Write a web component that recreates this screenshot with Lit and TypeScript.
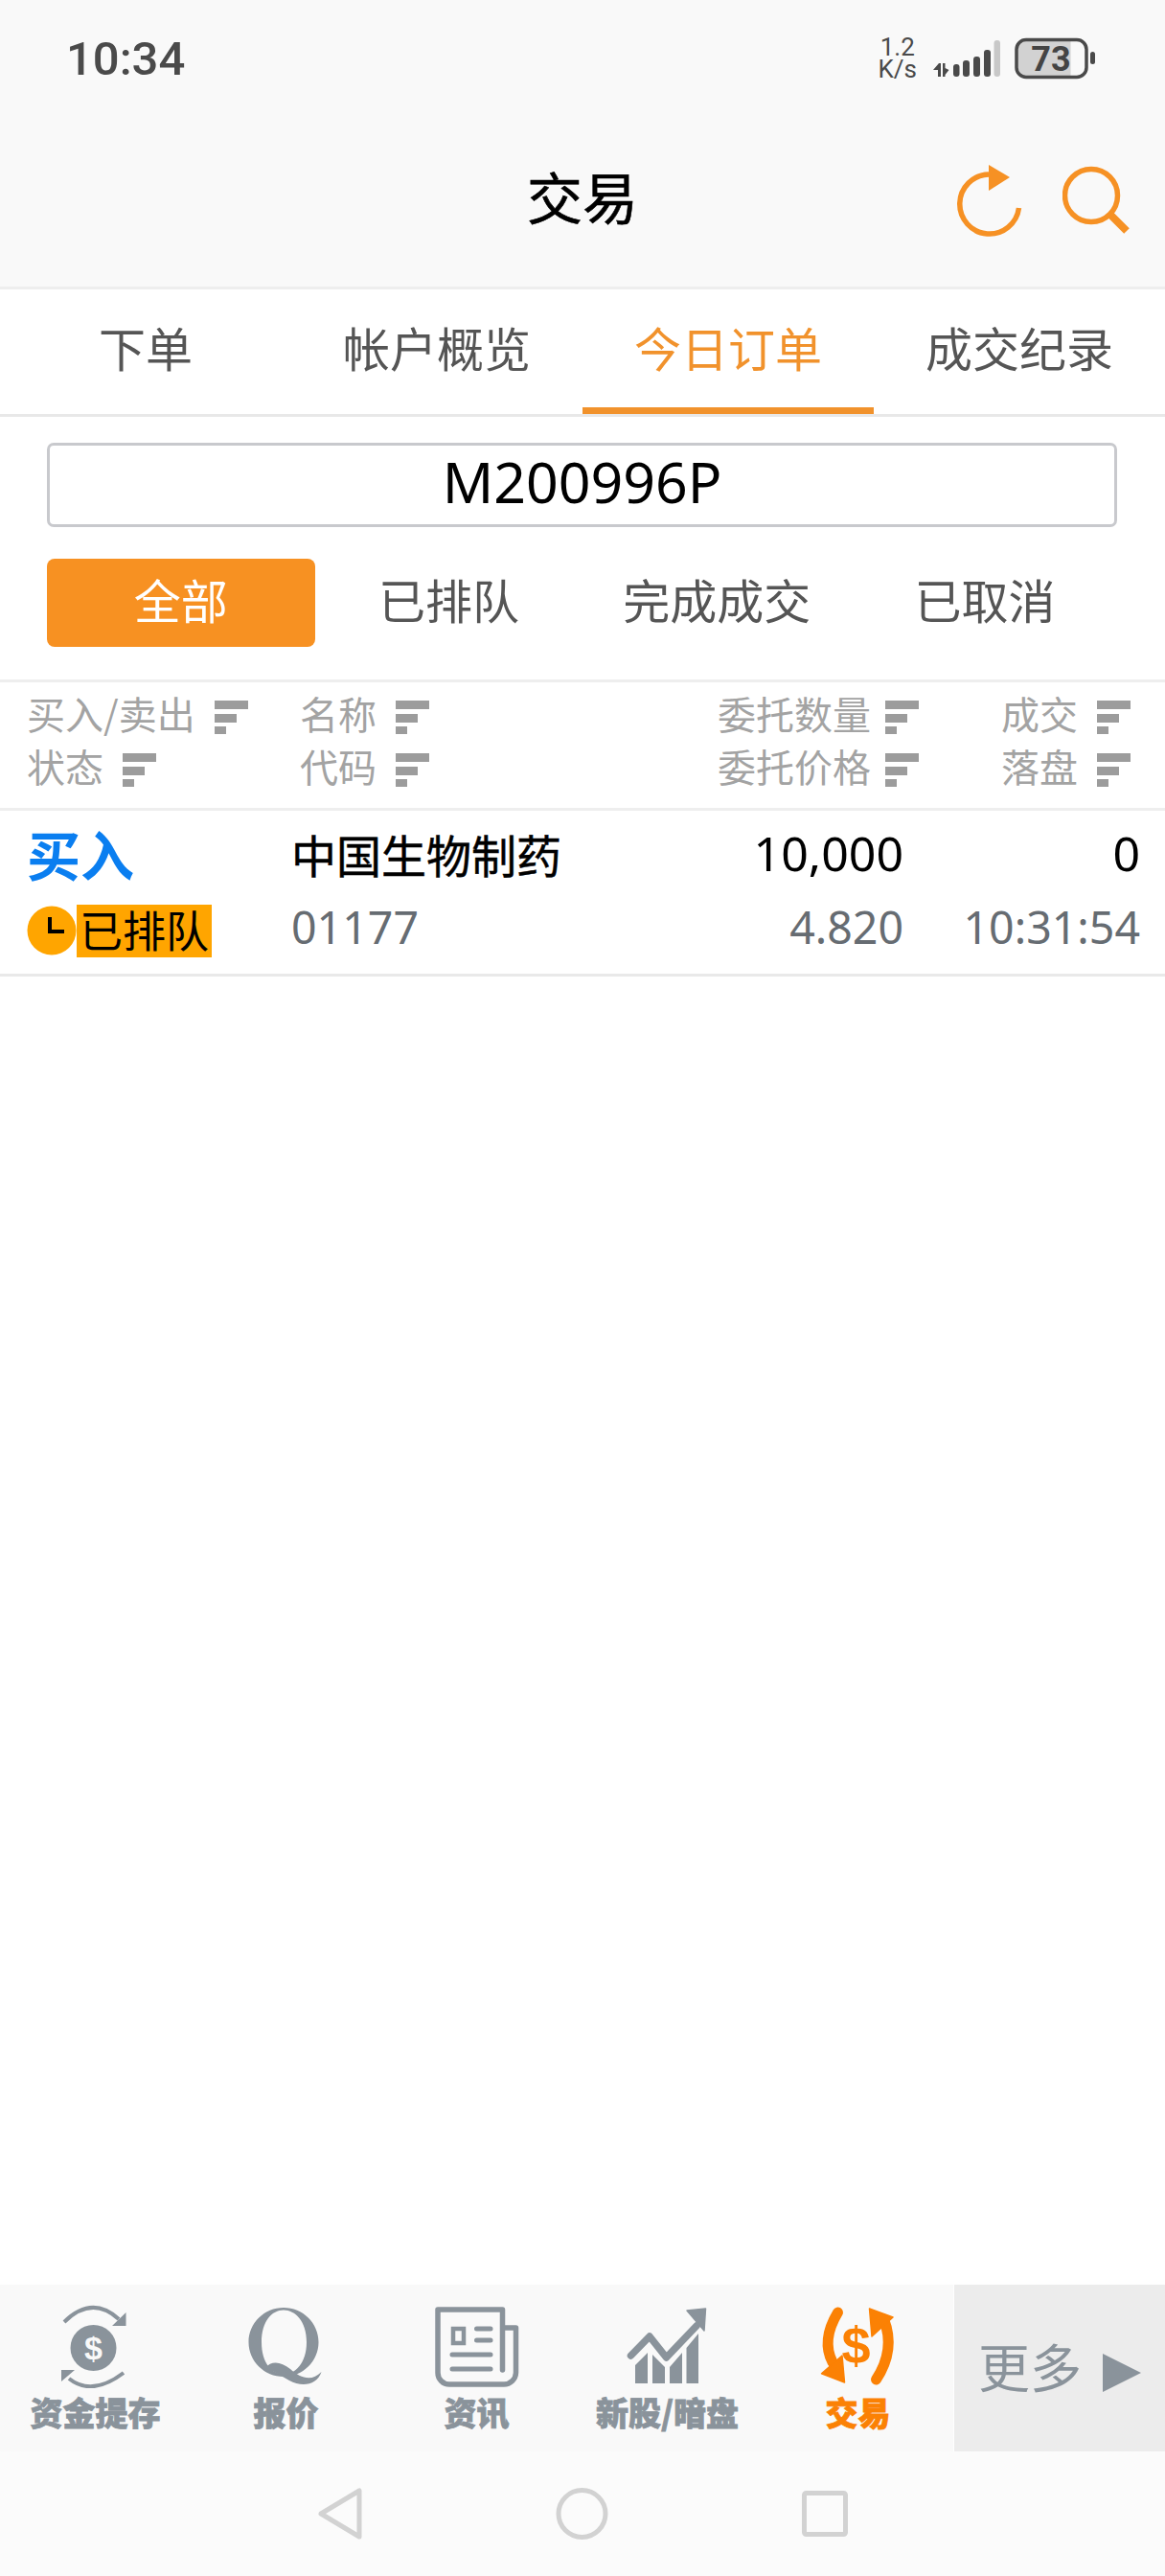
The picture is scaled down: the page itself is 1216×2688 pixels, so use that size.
import { LitElement, html, css, svg } from 'lit'
import { customElement } from 'lit/decorators.js'

const sortIcon = html`<svg class="sort" viewBox="0 0 35 35" width="35" height="35">
  <path d="M0 0h35v9H0zM0 14h23v9H0zM0 27h12v8H0z" fill="#9c9c9c" />
</svg>`

const grey = '#8a939b'
const hot = '#fb8104'

const navItems = [
  { label: '资金提存', icon: svg`
    <circle cx="47.5" cy="46" r="24" fill="${grey}"/>
    <path d="M17 19Q46 -9.5 74 16M79 72Q46 97 22 78" fill="none" stroke="${grey}" stroke-width="4"/>
    <path d="M81.5 9v14H67zM14 81V69h14z" fill="${grey}"/>
    <text x="47.5" y="58" text-anchor="middle" font-size="34" font-weight="700" fill="#f9f9f9" font-family="Liberation Sans">$</text>` },
  { label: '报价', icon: svg`
    <path fill-rule="evenodd" fill="${grey}" d="M47 4C67 4 83.5 20 83.5 40S67 76 47 76 10.5 60 10.5 40 27 4 47 4zM47 6.5C35 6.5 24 18 24 40S35 73.5 47 73.5 71 62 71 40 59 6.5 47 6.5z"/>
    <path fill="${grey}" d="M28 67C34 59 44 60 54 68 64 77 76 82 86.5 71 82 85 66 87 53 80 44 75 36 70 28 67z"/>` },
  { label: '资讯', icon: svg`
    <path d="M76.5 69V6H9V72A12 12 0 0 0 21 84H78A12.5 12.5 0 0 0 90.5 72V25H78" fill="none" stroke="${grey}" stroke-width="5.5" stroke-linejoin="round" stroke-linecap="round"/>
    <rect x="25" y="26" width="11" height="15" fill="none" stroke="${grey}" stroke-width="4.5"/>
    <path d="M49.5 26H64M49.5 38H64M24 53H64M24 68H64" stroke="${grey}" stroke-width="5" stroke-linecap="round"/>` },
  { label: '新股/暗盘', icon: svg`
    <path d="M11.5 54 31 34 48.5 56 80 23" fill="none" stroke="${grey}" stroke-width="7.5" stroke-linecap="round" stroke-linejoin="round"/>
    <path d="M70 7 89.5 5 88 28z" fill="${grey}" stroke="${grey}" stroke-width="1.5" stroke-linejoin="round"/>
    <path d="M16 83V64L29 51V83zM34 83V53L47 66V83zM52 83V66L65 51V83zM69.5 83V46L82 31V83z" fill="${grey}"/>` },
  { label: '交易', active: true, icon: svg`
    <path d="M28.5 9Q11 38 23 61" fill="none" stroke="${hot}" stroke-width="11" stroke-linecap="round"/>
    <path d="M11.5 72.7 33 54 35.5 82z" fill="${hot}" stroke="${hot}" stroke-width="1.5" stroke-linejoin="round"/>
    <path d="M76.5 16Q89 48 68.5 79" fill="none" stroke="${hot}" stroke-width="11" stroke-linecap="round"/>
    <path d="M61.5 5 86 14 64 34z" fill="${hot}" stroke="${hot}" stroke-width="1.5" stroke-linejoin="round"/>
    <text x="47.5" y="62" text-anchor="middle" font-size="54" font-weight="700" fill="${hot}" font-family="Liberation Sans">$</text>` },
]

@customElement('app-root')
export class AppRoot extends LitElement {
  static styles = css`
    :host {
      display: flex;
      flex-direction: column;
      width: 1216px;
      height: 2688px;
      background: #fff;
      font-family: "Noto Sans CJK SC", "Noto Sans", sans-serif;
      color: #000;
      overflow: hidden;
    }

    .top {
      height: 302px;
      box-sizing: border-box;
      background: #f9f9f9;
      border-bottom: 3px solid #eee;
      display: flex;
      flex-direction: column;
      flex: none;
    }

    .status {
      height: 128px;
      display: flex;
      align-items: center;
      padding: 0 73px 6px 69px;
      box-sizing: border-box;
      flex: none;
    }
    .clock {
      font-family: Roboto, sans-serif;
      font-size: 49px;
      font-weight: 500;
      color: #4a4a4a;
      flex: 1;
    }
    .speed {
      font-family: Roboto, sans-serif;
      font-size: 26px;
      line-height: 23px;
      color: #4a4a4a;
      text-align: center;
      margin-right: 17px;
    }
    .signal { margin-right: 15px; display: block; }
    .battery { display: block; }

    .title-bar {
      flex: 1;
      display: flex;
      align-items: center;
      justify-content: center;
      position: relative;
      padding-bottom: 19px;
    }
    .title {
      font-size: 58px;
      line-height: 1;
      -webkit-text-stroke: 0.6px #000;
    }
    .actions {
      position: absolute;
      left: 999px;
      top: 44px;
      display: flex;
      gap: 40px;
    }

    .tabs {
      display: grid;
      grid-template-columns: repeat(4, 1fr);
      height: 133px;
      box-sizing: border-box;
      border-bottom: 3px solid #e8e8e8;
      flex: none;
    }
    .tab {
      display: flex;
      align-items: center;
      justify-content: center;
      font-size: 49px;
      color: #555;
      box-sizing: border-box;
      padding-bottom: 4px;
      border-bottom: 7px solid transparent;
    }
    .tab.on { color: #f1922c; border-bottom-color: #f1922c; }

    .account {
      margin: 27px 50px 0 49px;
      height: 88px;
      border: 3px solid #c8c9cd;
      border-radius: 7px;
      box-sizing: border-box;
      display: flex;
      align-items: center;
      justify-content: center;
      padding-bottom: 7px;
      font-size: 59px;
      font-family: "Noto Sans", sans-serif;
      line-height: 1;
      flex: none;
    }

    .filters {
      margin: 33px 48px 0 49px;
      height: 92px;
      display: grid;
      grid-template-columns: repeat(4, 1fr);
      flex: none;
    }
    .filter {
      display: flex;
      align-items: center;
      justify-content: center;
      font-size: 49px;
      color: #555;
      border-radius: 8px;
      padding-bottom: 10px;
      box-sizing: border-box;
    }
    .filter.on { background: #f79122; color: #fff; }

    .thead {
      margin-top: 34px;
      height: 137px;
      box-sizing: border-box;
      border-top: 3px solid #eee;
      border-bottom: 3px solid #eee;
      display: grid;
      grid-template-columns: 285px 1fr 300px 221px;
      grid-template-rows: 55px 55px;
      align-content: center;
      padding: 0 36px 12px 28px;
      font-size: 40px;
      color: #a3a3a3;
      flex: none;
    }
    .hd { display: flex; align-items: center; gap: 20px; line-height: 1; }
    .hd.r { justify-content: flex-end; }
    .hd.tight { gap: 15px; }
    .sort { display: block; flex: none; margin-top: 9px; }

    .row {
      height: 173px;
      box-sizing: border-box;
      border-bottom: 3px solid #e9e9e9;
      display: grid;
      grid-template-columns: 276px 1fr 300px 247px;
      grid-template-rows: 77px 77px;
      align-content: center;
      padding: 0 26px 5px 28px;
      flex: none;
    }
    .buy { color: #0a7ef0; font-size: 56px; font-weight: 700; line-height: 1; align-self: center; }
    .name { font-size: 47px; line-height: 1; align-self: center; -webkit-text-stroke: 0.5px #000; }
    .qty { font-size: 50px; font-family: "Noto Sans", sans-serif; text-align: right; line-height: 1; align-self: center; }
    .sub { font-size: 46.5px; font-family: "Noto Sans", sans-serif; color: #666c72; text-align: right; line-height: 1; align-self: center; }
    .sub.l { text-align: left; }
    .state { display: flex; align-items: center; align-self: center; margin-top: 8px; }
    .chip {
      background: #ffa500;
      font-size: 45px;
      line-height: 1;
      height: 55px;
      box-sizing: border-box;
      padding: 3px 3px 0;
    }

    .spacer { flex: 1; }

    .nav {
      height: 174px;
      background: #f9f9f9;
      display: flex;
      flex: none;
    }
    .nav-item {
      width: 199px;
      display: flex;
      flex-direction: column;
      align-items: center;
      color: #8a939b;
      font-size: 34px;
      font-weight: 900;
      line-height: 1;
      padding-top: 20px;
      box-sizing: border-box;
      gap: 8px;
    }
    .nav-item span { -webkit-text-stroke: 0.8px currentColor; }
    .nav-item.on { color: #fb8104; }
    .nav-item svg { display: block; }
    .more {
      flex: 1;
      border-left: 1px solid #fff;
      background: #ececec;
      display: flex;
      align-items: center;
      justify-content: center;
      gap: 22px;
      color: #8a939b;
      font-size: 54px;
      line-height: 1;
      padding-bottom: 4px;
    }
    .more svg { margin-top: 14px; display: block; }

    .sys {
      height: 130px;
      background: #fbfbfb;
      flex: none;
    }
    .sys svg { display: block; }
  `

  render () {
    return html`
      <div class="top">
        <div class="status">
          <span class="clock">10:34</span>
          <div class="speed">1.2<br />K/s</div>
          <svg class="signal" width="70" height="38" viewBox="0 0 70 38">
            <path d="M0 31l6-7h2v14H5v-7zM10 24h2.500v5l4 2-4 5v2H10z" fill="#4a4a4a"/>
            <rect x="21" y="25" width="6.500" height="13" rx="3" fill="#4a4a4a"/>
            <rect x="31" y="21" width="7" height="17" rx="3" fill="#4a4a4a"/>
            <rect x="42" y="17" width="7" height="21" rx="3" fill="#4a4a4a"/>
            <rect x="53" y="10" width="7" height="28" rx="3" fill="#4a4a4a"/>
            <rect x="63.500" y="0" width="6.500" height="38" rx="3" fill="#c8c8c8"/>
          </svg>
          <svg class="battery" width="84" height="44" viewBox="0 0 84 44">
            <path d="M3 13a9 9 0 0 1 9-9h46.500v36H12a9 9 0 0 1-9-9z" fill="#d2d2d2"/>
            <rect x="2" y="2.500" width="73" height="39" rx="10" fill="none" stroke="#4a4a4a" stroke-width="3.500"/>
            <rect x="79" y="15" width="5" height="13" rx="2.500" fill="#4a4a4a"/>
            <text x="38" y="35" text-anchor="middle" font-size="36" font-weight="700" fill="#444" font-family="Roboto">73</text>
          </svg>
        </div>
        <div class="title-bar">
          <span class="title">交易</span>
          <div class="actions">
            <svg width="70" height="76" viewBox="0 0 70 76" fill="none">
              <path d="M64.500 45A31 31 0 1 1 33 10" stroke="#f69124" stroke-width="5.500"/>
              <path d="M33 0 55 13 33 27z" fill="#f69124"/>
            </svg>
            <svg width="70" height="72" viewBox="0 0 70 72" fill="none">
              <circle cx="30" cy="32" r="27.500" stroke="#f69124" stroke-width="5.500"/>
              <path d="M50 52 67 69" stroke="#f69124" stroke-width="8"/>
            </svg>
          </div>
        </div>
      </div>

      <div class="tabs">
        <div class="tab">下单</div>
        <div class="tab">帐户概览</div>
        <div class="tab on">今日订单</div>
        <div class="tab">成交纪录</div>
      </div>

      <div class="account">M200996P</div>

      <div class="filters">
        <div class="filter on">全部</div>
        <div class="filter">已排队</div>
        <div class="filter">完成成交</div>
        <div class="filter">已取消</div>
      </div>

      <div class="thead">
        <span class="hd">买入/卖出${sortIcon}</span>
        <span class="hd">名称${sortIcon}</span>
        <span class="hd r tight">委托数量${sortIcon}</span>
        <span class="hd r">成交${sortIcon}</span>
        <span class="hd">状态${sortIcon}</span>
        <span class="hd">代码${sortIcon}</span>
        <span class="hd r tight">委托价格${sortIcon}</span>
        <span class="hd r">落盘${sortIcon}</span>
      </div>

      <div class="row">
        <span class="buy">买入</span>
        <span class="name">中国生物制药</span>
        <span class="qty">10,000</span>
        <span class="qty">0</span>
        <span class="state">
          <svg width="52" height="52" viewBox="0 0 52 52">
            <circle cx="26" cy="26" r="25.500" fill="#ffa500"/>
            <path d="M24 12v15h15" fill="none" stroke="#000" stroke-width="4"/>
          </svg>
          <span class="chip">已排队</span>
        </span>
        <span class="sub l">01177</span>
        <span class="sub">4.820</span>
        <span class="sub">10:31:54</span>
      </div>

      <div class="spacer"></div>

      <div class="nav">
        ${navItems.map(n => html`
          <div class="nav-item ${n.active ? 'on' : ''}">
            <svg width="100" height="88" viewBox="0 0 100 88">${n.icon}</svg>
            <span>${n.label}</span>
          </div>`)}
        <div class="more">
          <span>更多</span>
          <svg width="40" height="40" viewBox="0 0 40 40"><path d="M0 0l40 20-40 20z" fill="#8a939b"/></svg>
        </div>
      </div>

      <div class="sys">
        <svg width="1216" height="130" viewBox="0 0 1216 130" fill="none" stroke="#d2d2d2" stroke-width="5">
          <path d="M375 41v48L335 65z" stroke-linejoin="round"/>
          <circle cx="607.500" cy="65" r="24.500"/>
          <rect x="839.500" y="43.500" width="43" height="43" rx="2"/>
        </svg>
      </div>
    `
  }
}
